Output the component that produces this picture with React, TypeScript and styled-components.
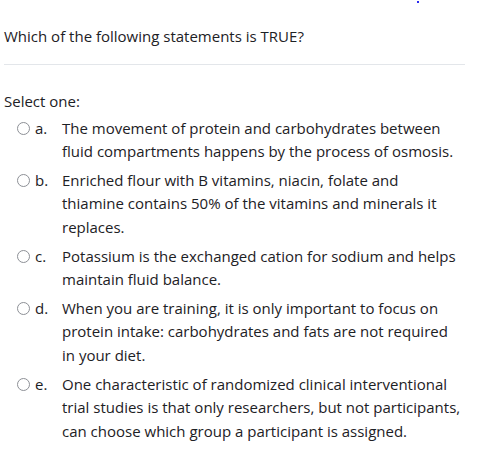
import React from "react";
import styled, { createGlobalStyle } from "styled-components";

const GlobalStyle = createGlobalStyle`
  html, body {
    margin: 0;
    padding: 0;
    background: #ffffff;
  }
  body {
    font-family: "Open Sans", "Noto Sans", sans-serif;
    font-size: 15px;
    line-height: 23.6px;
    color: #1d2125;
  }
`;

const Page = styled.div`
  width: 461px;
  padding: 1px 0 0 4px;
`;

const Marker = styled.span`
  display: block;
  width: 2px;
  height: 2px;
  margin-left: 413px;
  background: #2b2bf0;
`;

const Question = styled.div`
  margin: 22px 0 0;
  padding-bottom: 15px;
  border-bottom: 1px solid #e3e6ea;
`;

const Prompt = styled.div`
  margin-top: 25px;
  margin-bottom: 1px;
`;

const Answers = styled.div`
  display: flex;
  flex-direction: column;
`;

const Option = styled.label`
  display: grid;
  grid-template-columns: 31px 27px 1fr;
  padding: 2.5px 3px 2.5px 0;
  cursor: pointer;
`;

const RadioCell = styled.span`
  display: flex;
  justify-content: flex-end;
  padding-right: 5px;
  height: 23.6px;
  align-items: center;
`;

const Radio = styled.span`
  box-sizing: border-box;
  width: 13px;
  height: 13px;
  border-radius: 50%;
  border: 1px solid #8d9096;
  background: #fff;
`;

const Letter = styled.span``;

const Text = styled.span``;

const options = [
  {
    key: "a.",
    text: "The movement of protein and carbohydrates between fluid compartments happens by the process of osmosis.",
  },
  {
    key: "b.",
    text: "Enriched flour with B vitamins, niacin, folate and thiamine contains 50% of the vitamins and minerals it replaces.",
  },
  {
    key: "c.",
    text: "Potassium is the exchanged cation for sodium and helps maintain fluid balance.",
  },
  {
    key: "d.",
    text: "When you are training, it is only important to focus on protein intake: carbohydrates and fats are not required in your diet.",
  },
  {
    key: "e.",
    text: "One characteristic of randomized clinical interventional trial studies is that only researchers, but not participants, can choose which group a participant is assigned.",
  },
];

export default function App() {
  return (
    <>
      <GlobalStyle />
      <Page>
        <Marker />
        <Question>Which of the following statements is TRUE?</Question>
        <Prompt>Select one:</Prompt>
        <Answers>
          {options.map((o) => (
            <Option key={o.key}>
              <RadioCell>
                <Radio />
              </RadioCell>
              <Letter>{o.key}</Letter>
              <Text>{o.text}</Text>
            </Option>
          ))}
        </Answers>
      </Page>
    </>
  );
}
